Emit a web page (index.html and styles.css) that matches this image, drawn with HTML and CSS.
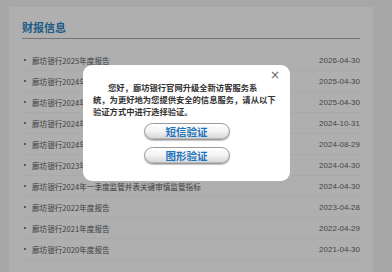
FILE: index.html
```html
<!DOCTYPE html>
<html lang="zh-CN">
<head>
<meta charset="utf-8">
<link rel="stylesheet" href="styles.css">
</head>
<body>
<div class="page">
  <div class="panel">
    <h2 class="title"><span>财报信息</span></h2>
    <ul class="list">
      <li><span class="name">廊坊银行2025年度报告</span><span class="date">2026-04-30</span></li>
      <li><span class="name">廊坊银行2024年度报告</span><span class="date">2025-04-30</span></li>
      <li><span class="name">廊坊银行2024年资本充足率报告</span><span class="date">2025-04-30</span></li>
      <li><span class="name">廊坊银行2024年第三季度报告</span><span class="date">2024-10-31</span></li>
      <li><span class="name">廊坊银行2024年半年度报告</span><span class="date">2024-08-29</span></li>
      <li><span class="name">廊坊银行2023年度报告</span><span class="date">2024-04-30</span></li>
      <li><span class="name">廊坊银行2024年一季度监管并表关键审慎监管指标</span><span class="date">2024-04-30</span></li>
      <li><span class="name">廊坊银行2022年度报告</span><span class="date">2023-04-28</span></li>
      <li><span class="name">廊坊银行2021年度报告</span><span class="date">2022-04-29</span></li>
      <li><span class="name">廊坊银行2020年度报告</span><span class="date">2021-04-30</span></li>
    </ul>
  </div>
</div>
<div class="mask"></div>
<div class="dialog">
  <span class="close">×</span>
  <p class="msg"><span class="indent"></span>您好，廊坊银行官网升级全新访客服务系<br>统，为更好地为您提供安全的信息服务，请从以下<br>验证方式中进行选择验证。</p>
  <div class="actions">
    <button class="btn">短信验证</button>
    <button class="btn">图形验证</button>
  </div>
</div>
</body>
</html>
```

FILE: styles.css
```css
html, body {
  margin: 0;
  padding: 0;
  height: 100%;
}
body {
  background: #efefef;
  font-family: "Noto Sans CJK SC", "Liberation Sans", sans-serif;
  overflow: hidden;
}
.page {
  height: 100%;
  padding: 7px 19px 0 9px;
  box-sizing: border-box;
}
.panel {
  background: #fbfbfb;
  height: 100%;
  padding: 12px 13px 0 13px;
  box-sizing: border-box;
}
.title {
  margin: 0;
  height: 19px;
  border-bottom: 1px solid #a8a8a8;
  font-size: 11px;
  line-height: 16px;
  font-weight: bold;
  color: #2a85c2;
}
.list {
  list-style: none;
  margin: 11px 0 0 0;
  padding: 0;
}
.list li {
  display: flex;
  justify-content: space-between;
  align-items: center;
  height: 21px;
  font-size: 7.6px;
  color: #5a5a5a;
  border-bottom: 1px solid #f3f3f3;
  box-sizing: border-box;
}
.name {
  padding-left: 10px;
  position: relative;
}
.name::before {
  content: "";
  position: absolute;
  left: 2px;
  top: 50%;
  width: 2px;
  height: 2px;
  margin-top: -1px;
  background: #555;
  border-radius: 50%;
}
.date {
  font-family: "Liberation Sans", sans-serif;
  font-size: 8px;
  color: #666;
}
.mask {
  position: fixed;
  inset: 0;
  background: rgba(0, 0, 0, 0.3);
}
.dialog {
  position: fixed;
  left: 83px;
  top: 65px;
  width: 207px;
  height: 116px;
  background: #fff;
  border-radius: 9px;
  box-sizing: border-box;
  padding: 16px 10px 0 10px;
}
.close {
  position: absolute;
  right: 10px;
  top: 3px;
  font-family: "DejaVu Sans", sans-serif;
  font-size: 12px;
  color: #666;
}
.msg {
  margin: 0;
  font-size: 8.3px;
  line-height: 12px;
  color: #333;
  font-weight: bold;
  white-space: nowrap;
}
.indent {
  display: inline-block;
  width: 15px;
}
.actions {
  display: flex;
  flex-direction: column;
  align-items: center;
  gap: 7px;
  margin-top: 6px;
}
.btn {
  width: 86px;
  height: 17px;
  border-radius: 9px;
  border: 1px solid #9a9a9a;
  background: linear-gradient(#ffffff 0%, #f4f4f4 45%, #d6d6d6 100%);
  box-shadow: inset 0 -1px 1px rgba(0,0,0,0.15), 0 1px 1px rgba(0,0,0,0.25);
  font-family: "Noto Sans CJK SC", sans-serif;
  font-size: 10.5px;
  font-weight: bold;
  color: #1f74bd;
  padding: 0;
  line-height: 15px;
}
```
